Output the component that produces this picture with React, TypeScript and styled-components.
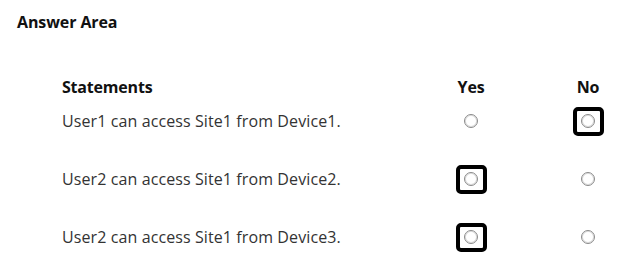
import styled, { createGlobalStyle } from "styled-components";

const GlobalStyle = createGlobalStyle`
  html, body {
    margin: 0;
    padding: 0;
    background: #ffffff;
  }
  body {
    font-family: "Open Sans", "Noto Sans", "Liberation Sans", sans-serif;
    color: #333333;
  }
`;

type Answer = "yes" | "no";

const statements: { text: string; answer: Answer }[] = [
  { text: "User1 can access Site1 from Device1.", answer: "no" },
  { text: "User2 can access Site1 from Device2.", answer: "yes" },
  { text: "User2 can access Site1 from Device3.", answer: "yes" },
];

const Page = styled.div`
  width: 624px;
  height: 266px;
  padding: 12px 0 0 17px;
  box-sizing: border-box;
`;

const Title = styled.h1`
  margin: 0;
  font-size: 16px;
  line-height: 20px;
  font-weight: 700;
  letter-spacing: -0.1px;
  color: #111111;
`;

const Table = styled.div`
  margin: 40px 0 0 45px;
  display: flex;
  flex-direction: column;
`;

const Rows = styled.div`
  display: flex;
  flex-direction: column;
  gap: 28px;
  margin-top: 4px;
`;

const Row = styled.div`
  display: grid;
  grid-template-columns: 322px 60px 60px;
  column-gap: 57px;
  height: 30px;
  align-items: center;
`;

const HeadCell = styled.div<{ $center?: boolean }>`
  font-size: 16px;
  font-weight: 700;
  letter-spacing: -0.2px;
  color: #111111;
  text-align: ${(p) => (p.$center ? "center" : "left")};
`;

const Statement = styled.div`
  font-size: 16px;
  letter-spacing: 0.1px;
  color: #333333;
  white-space: nowrap;
`;

const OptionCell = styled.div`
  display: flex;
  justify-content: center;
  align-items: center;
`;

const Frame = styled.div<{ $selected: boolean }>`
  width: 31px;
  height: 29px;
  box-sizing: border-box;
  border: 4px solid ${(p) => (p.$selected ? "#000000" : "transparent")};
  border-radius: 5px;
  display: flex;
  justify-content: center;
  align-items: center;
`;

const Radio = styled.span`
  width: 14px;
  height: 14px;
  box-sizing: border-box;
  border-radius: 50%;
  border: 1px solid #8a8a8a;
  background: #ffffff;
  box-shadow: inset 0 0 0 1px #dcdcdc;
`;

const Option = ({ selected }: { selected: boolean }) => (
  <OptionCell>
    <Frame $selected={selected}>
      <Radio />
    </Frame>
  </OptionCell>
);

export default function App() {
  return (
    <Page>
      <GlobalStyle />
      <Title>Answer Area</Title>
      <Table>
        <Row>
          <HeadCell>Statements</HeadCell>
          <HeadCell $center>Yes</HeadCell>
          <HeadCell $center>No</HeadCell>
        </Row>
        <Rows>
          {statements.map((s) => (
            <Row key={s.text}>
              <Statement>{s.text}</Statement>
              <Option selected={s.answer === "yes"} />
              <Option selected={s.answer === "no"} />
            </Row>
          ))}
        </Rows>
      </Table>
    </Page>
  );
}
